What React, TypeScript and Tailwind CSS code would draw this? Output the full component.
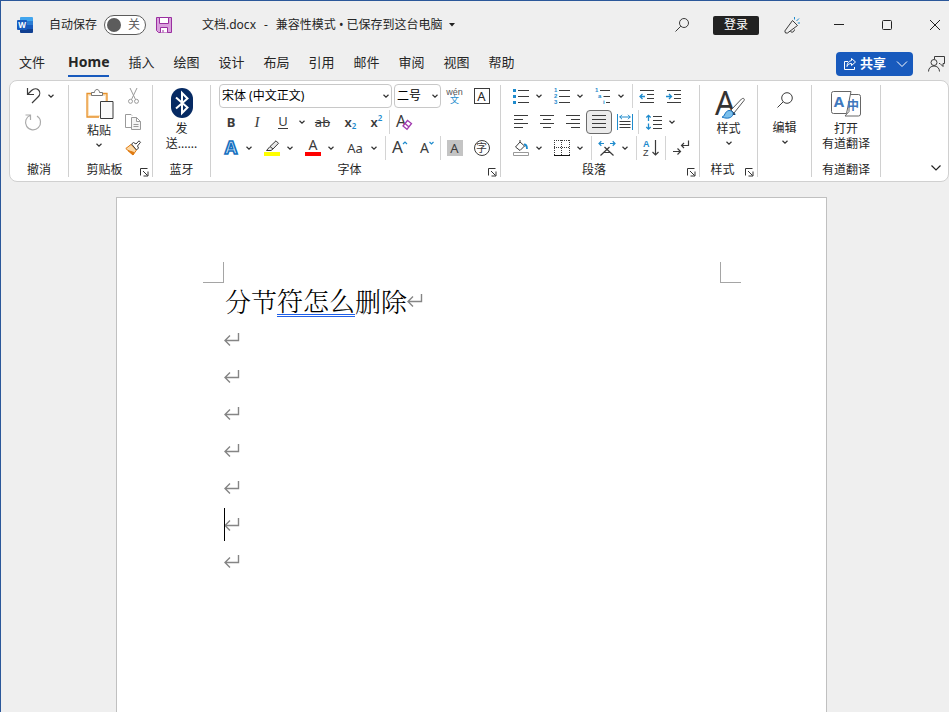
// App.tsx
import type { ReactNode } from 'react';

const UI_FONT = "font-['Noto_Sans','Noto_Sans_CJK_SC',sans-serif]";

const TABS = ['Home', '插入', '绘图', '设计', '布局', '引用', '邮件', '审阅', '视图', '帮助'];
const EMPTY_LINES = [1, 2, 3, 4, 5, 6, 7];
const CURSOR_LINE = 6;

const BLUE = '#1e8bcd';
const INK = '#3b3b3b';

// ---------- shared pieces ----------

type IconProps = { w: number; h: number; children: ReactNode; stroke?: string };

function Icon({ w, h, children, stroke = INK }: IconProps) {
  return (
    <svg
      width={w}
      height={h}
      viewBox={`0 0 ${w} ${h}`}
      fill="none"
      stroke={stroke}
      className="shrink-0 overflow-visible"
      aria-hidden="true"
    >
      {children}
    </svg>
  );
}

function Chevron() {
  return (
    <Icon w={6} h={4} stroke="#333">
      <path d="M.5.7 3 3.1 5.5.7" strokeWidth="1.2" />
    </Icon>
  );
}

type BtnProps = { label: string; w?: string; active?: boolean; children: ReactNode };

function Btn({ label, w = 'w-6', active, children }: BtnProps) {
  return (
    <button
      type="button"
      aria-label={label}
      className={`flex h-6 shrink-0 items-center justify-center rounded ${w} ${
        active ? 'border border-[#6b6b6b] bg-[#ebebeb]' : ''
      }`}
    >
      {children}
    </button>
  );
}

function Split({ label, w, children }: BtnProps) {
  return (
    <div className="flex shrink-0">
      <Btn label={label} w={w}>
        {children}
      </Btn>
      <Btn label={`${label}选项`} w="w-3">
        <Chevron />
      </Btn>
    </div>
  );
}

function Row({ className = '', children }: { className?: string; children: ReactNode }) {
  return <div className={`flex h-[26px] items-center ${className}`}>{children}</div>;
}

function Sep() {
  return <div className="h-6 w-px shrink-0 bg-[#d4d4d4]" />;
}

type GroupProps = { title: string; w: string; launcher?: boolean; children: ReactNode };

function Group({ title, w, launcher, children }: GroupProps) {
  return (
    <>
      <section aria-label={title} className={`flex shrink-0 flex-col ${w}`}>
        <div className="h-[78px]">{children}</div>
        <div className="flex h-[18px] items-center">
          <span className="flex-1 text-center">{title}</span>
          {launcher && (
            <button type="button" aria-label={`${title}设置`} className="mr-[3px] self-end pb-0.5">
              <Icon w={9} h={9} stroke="#333">
                <path d="M.5 7.5v-7h7M3 3l4.5 4.5M8 3.5v4.5H3.5" />
              </Icon>
            </button>
          )}
        </div>
      </section>
      <div className="my-0.5 w-px shrink-0 bg-[#d0d0d0]" />
    </>
  );
}

// ---------- title bar ----------

function WordLogo() {
  return (
    <Icon w={16} h={16} stroke="none">
      <path d="M4 0h11a1 1 0 0 1 1 1v3H3V1a1 1 0 0 1 1-1Z" fill="#41a5ee" />
      <path d="M3 4h13v4H3z" fill="#2b7cd3" />
      <path d="M3 8h13v4H3z" fill="#185abd" />
      <path d="M3 12h13v3a1 1 0 0 1-1 1H4a1 1 0 0 1-1-1Z" fill="#103f91" />
      <rect x="0" y="3" width="10" height="10" rx="1" fill="#185abd" />
      <text x="5" y="11" textAnchor="middle" fontSize="8" fontWeight="700" fill="#fff">
        W
      </text>
    </Icon>
  );
}

function TitleBar() {
  return (
    <header className="flex h-12 shrink-0 items-center pl-4">
      <WordLogo />
      <label htmlFor="autosave" className="ml-4">
        自动保存
      </label>
      <button
        id="autosave"
        type="button"
        role="switch"
        aria-checked="false"
        className="ml-[7px] flex h-5 w-[42px] items-center justify-between rounded-full border border-[#5c5c5c] bg-white pr-[5px] pl-[2px]"
      >
        <span className="size-[14px] rounded-full bg-[#5c5c5c]" />
        <span className="text-[#5c5c5c]">关</span>
      </button>
      <button type="button" aria-label="保存" className="ml-[10px]">
        <Icon w={16} h={16} stroke="#9a2fa0">
          <path d="M.5.5h15v15h-13l-2-2Z" fill="#d9a0dc" />
          <path d="M3.5.5h9v6h-9zM4.5 15.5v-5h7v5M7 13v2.5" fill="#fff" />
        </Icon>
      </button>
      <button type="button" className="ml-[30px] flex items-center">
        <span>文档.docx</span>
        <span className="px-2">-</span>
        <span>兼容性模式 • 已保存到这台电脑</span>
        <Icon w={17} h={4} stroke="none">
          <path d="M6 0h6L9 3.5Z" fill="#222" />
        </Icon>
      </button>

      <div className="ml-auto flex items-center">
        <button type="button" aria-label="搜索" className="mr-6">
          <Icon w={14} h={14}>
            <circle cx="9" cy="5" r="4.5" />
            <path d="M5.8 8.2.5 13.5" />
          </Icon>
        </button>
        <button type="button" className="h-[19px] w-[46px] rounded-xs bg-[#222] text-white">
          登录
        </button>
        <button type="button" aria-label="即将推出" className="flex w-[66px] justify-center">
          <Icon w={16} h={16}>
            <path d="M8.5 3.5 13.500 8.500 3.500 16H1.500L.8 14Z" strokeLinejoin="round" />
            <path d="M6.500 14c.5 2 3.800 1.500 4-1.500" />
            <path d="M10.500 2.500V0M12.500 4 15 1.500M13.800 6H16" stroke={BLUE} />
          </Icon>
        </button>
        <button type="button" aria-label="最小化" className="flex w-[28px] justify-center">
          <Icon w={10} h={10} stroke="#222">
            <path d="M0 4.500h10" />
          </Icon>
        </button>
        <button type="button" aria-label="最大化" className="flex w-[68px] justify-center">
          <Icon w={10} h={10} stroke="#222">
            <rect x=".5" y=".5" width="9" height="9" rx="1" />
          </Icon>
        </button>
        <button type="button" aria-label="关闭" className="flex w-7 justify-center">
          <Icon w={10} h={10} stroke="#222">
            <path d="m0 0 10 10M10 0 0 10" />
          </Icon>
        </button>
      </div>
    </header>
  );
}

function TabBar() {
  return (
    <nav className="flex h-[31px] shrink-0 items-start pr-1 pl-[18px] text-[13px]">
      <button type="button" className="h-7 border-b-2 border-transparent">
        文件
      </button>
      <div role="tablist" className="ml-[23px] flex gap-[19px]">
        {TABS.map((tab, i) => (
          <button
            key={tab}
            type="button"
            role="tab"
            aria-selected={i === 0}
            className={`h-7 border-b-2 ${
              i === 0 ? 'border-[#185abd] text-sm font-bold' : 'border-transparent'
            }`}
          >
            {tab}
          </button>
        ))}
      </div>
      <div className="ml-auto flex items-center pt-[3px]">
        <div className="flex h-6 rounded bg-[#185abd] font-bold text-white">
          <button type="button" className="flex items-center gap-1 pr-[5px] pl-2">
            <Icon w={12} h={12} stroke="#fff">
              <path d="M4 3.500H.5v8h10V9M7.500.5l4 3.500-4 3.500V5.500C5 5.500 4 6.500 3 8.500c0-3.500 2-5.500 4.500-6Z" />
            </Icon>
            <span className="pb-[3px]">共享</span>
          </button>
          <button type="button" aria-label="共享选项" className="px-1.5">
            <Icon w={10} h={6} stroke="#fff">
              <path d="m0 .5 5 5 5-5" />
            </Icon>
          </button>
        </div>
        <button type="button" aria-label="批注" className="ml-[15px]">
          <Icon w={17} h={16}>
            <path d="M6.500 3V.5h10v7h-1.500v3l-3-3h-1" />
            <circle cx="6" cy="6.500" r="3" />
            <path d="M.5 15.500c0-3.500 2.500-5.500 5.500-5.500s5.500 2 5.500 5.500" />
          </Icon>
        </button>
      </div>
    </nav>
  );
}

// ---------- ribbon ----------

function UndoGroup() {
  return (
    <Group title="撤消" w="w-[58px]">
      <Row className="pl-[11px]">
        <Split label="撤消">
          <Icon w={15} h={16}>
            <path d="M1.500 0v6.500H8M1.500 6.500l4-4C8 0 11 .5 12.500 2s2 4.500-.5 7l-6 6" strokeWidth="1.200" />
          </Icon>
        </Split>
      </Row>
      <Row className="pl-[11px]">
        <Btn label="重复">
          <Icon w={16} h={16} stroke="#ababab">
            <path d="M.5 1h5v5M5.500 1.300A7.500 7.500 0 1 0 12 2" strokeWidth="1.200" />
          </Icon>
        </Btn>
      </Row>
    </Group>
  );
}

function ClipboardGroup() {
  return (
    <Group title="剪贴板" w="w-[83px]" launcher>
      <div className="flex pl-3">
        <button type="button" className="flex w-9 flex-col items-center pt-1.5">
          <Icon w={28} h={30}>
            <path d="M2 5h20v23H2z" fill="#fbe3c0" stroke="none" />
            <path d="M4 7h16v19H4z" fill="#fff" stroke="none" />
            <path d="M7 4.500H2v23.500h12M17 4.500h5V12" stroke="#e8932c" strokeWidth="1.300" />
            <path d="M6.500 6.500v-3h3c0-4 5-4 5 0h3v3z" fill="#fff" stroke="#777" />
            <path d="M15.500 12.500h12.500v17H15.500z" fill="#fafafa" />
          </Icon>
          <span className="pt-0.5 leading-5">粘贴</span>
          <span className="flex h-2 items-center">
            <Chevron />
          </span>
        </button>
        <div className="w-8 pl-1">
          <Row>
            <Btn label="剪切">
              <Icon w={11} h={16} stroke="#9a9a9a">
                <path d="m2 0 5.500 11.500M9 0 3.500 11.500" />
                <circle cx="2.500" cy="13.300" r="2" />
                <circle cx="8.500" cy="13.300" r="2" />
              </Icon>
            </Btn>
          </Row>
          <Row>
            <Btn label="复制">
              <Icon w={16} h={16} stroke="#9a9a9a">
                <path d="M6 13.500H.5V.5H6l1 1" />
                <path d="M6.500 3.500h5l4 4v8h-9zM11.500 3.500v4h4M8.500 10.500h5M8.500 12.500h5" fill="#f4f4f4" />
              </Icon>
            </Btn>
          </Row>
          <Row>
            <Btn label="格式刷">
              <Icon w={16} h={16}>
                <path d="M6 4.500.8 8.500 8 15l3.500-5Z" fill="#fbd9a8" stroke="#e07a10" />
                <path d="m3 10.500 6 2-1 2.500z" fill="#e07a10" stroke="#e07a10" />
                <path d="m6.500 4 2-1.500 2.500 1.500L14 .8l1.500 1.500L12.500 6l1 2-2 2z" fill="#fff" />
              </Icon>
            </Btn>
          </Row>
        </div>
      </div>
    </Group>
  );
}

function BluetoothGroup() {
  return (
    <Group title="蓝牙" w="w-[57px]">
      <button type="button" className="flex w-full flex-col items-center pt-[5px] leading-[15px]">
        <Icon w={22} h={30} stroke="#fff">
          <rect width="22" height="30" rx="11" fill="#062a63" stroke="none" />
          <path d="m5 9.500 11.500 10L11 25V5l5.500 5.500L5 20.500" strokeWidth="2" />
        </Icon>
        <span className="pt-[3px]">发</span>
        <span>送......</span>
      </button>
    </Group>
  );
}

type PickerProps = { label: string; value: string; w: string };

function Picker({ label, value, w }: PickerProps) {
  return (
    <div className={`relative shrink-0 ${w}`}>
      <select
        aria-label={label}
        defaultValue={value}
        className="block h-6 w-full appearance-none rounded border border-[#c8c8c8] bg-white pl-[2px] text-black"
      >
        <option>{value}</option>
      </select>
      <span className="pointer-events-none absolute top-[10px] right-[3px]">
        <Chevron />
      </span>
    </div>
  );
}

function FontGroup() {
  return (
    <Group title="字体" w="w-[289px]" launcher>
      <Row className="pl-2">
        <Picker label="字体名称" value="宋体 (中文正文)" w="w-[173px]" />
        <div className="ml-0.5">
          <Picker label="字号" value="二号" w="w-[47px]" />
        </div>
        <Btn label="拼音指南" w="w-[27px]">
          <span className="flex flex-col items-center font-['Noto_Sans_CJK_SC',sans-serif] text-[9px] leading-2 text-[#555]">
            <span className="font-['Liberation_Sans',sans-serif]">wén</span>
            <span className="text-[#1e8bcd]">文</span>
          </span>
        </Btn>
        <Btn label="字符边框" w="w-[27px]">
          <span className="flex size-4 items-center justify-center border border-[#3b3b3b] text-[13px]">A</span>
        </Btn>
      </Row>
      <Row className="pl-[7px] text-[#3b3b3b]">
        <Btn label="加粗" w="w-[26px]">
          <b className="text-[13px]">B</b>
        </Btn>
        <Btn label="倾斜" w="w-[26px]">
          <i className="font-['Liberation_Serif',serif] text-[15px]">I</i>
        </Btn>
        <Split label="下划线" w="w-[26px]">
          <span className="border-b border-[#3b3b3b] text-[13px] leading-[13px]">U</span>
        </Split>
        <Btn label="删除线" w="w-[29px]">
          <s className="text-[13px]">ab</s>
        </Btn>
        <Btn label="下标" w="w-[27px]">
          <span className="text-[13px] font-semibold">x</span>
          <span className="self-end text-[8px] font-semibold text-[#1e8bcd]">2</span>
        </Btn>
        <Btn label="上标" w="w-[25px]">
          <span className="text-[13px] font-semibold">x</span>
          <span className="self-start text-[8px] font-semibold text-[#1e8bcd]">2</span>
        </Btn>
        <Sep />
        <Btn label="清除格式" w="w-[27px]">
          <Icon w={16} h={16}>
            <text x="0" y="13" fontSize="16" fill={INK} stroke="none">
              A
            </text>
            <path d="m7 12 4.500-5.500L15.500 9.500 11 15.300ZM9 9.500l4 3.500" stroke="#a23bb0" strokeWidth="1.300" fill="#fff" />
          </Icon>
        </Btn>
      </Row>
      <Row className="text-[#3b3b3b]">
        <div className="flex gap-[5px] pr-[5px] pl-2">
          <Split label="文本效果">
            <Icon w={16} h={16}>
              <text
                x="8"
                y="14"
                textAnchor="middle"
                fontSize="18"
                fontWeight="700"
                fill="#cfe6f7"
                stroke="#1470c0"
                strokeWidth="1.600"
              >
                A
              </text>
            </Icon>
          </Split>
          <Split label="突出显示">
            <Icon w={16} h={16}>
              <path d="M2.500 10.500 6 6.500 12 .8l2.500 2.500L9 9l-2 1.500ZM6 6.500 9 9" fill="#e8e8e8" />
              <path d="M0 12h16v4H0z" fill="#ff0" stroke="none" />
            </Icon>
          </Split>
          <Split label="字体颜色">
            <Icon w={16} h={16}>
              <text x="8" y="10" textAnchor="middle" fontSize="14" fill={INK} stroke="none">
                A
              </text>
              <path d="M0 12h16v4H0z" fill="#f00" stroke="none" />
            </Icon>
          </Split>
          <Split label="更改大小写" w="w-[26px]">
            <span className="text-[13px]">Aa</span>
          </Split>
        </div>
        <Sep />
        <Btn label="增大字号" w="w-[27px]">
          <Icon w={16} h={16}>
            <text x="0" y="13" fontSize="17" fill={INK} stroke="none">
              A
            </text>
            <path d="m11 4 2-2 2 2" stroke={BLUE} strokeWidth="1.200" />
          </Icon>
        </Btn>
        <Btn label="减小字号" w="w-[27px]">
          <Icon w={14} h={16}>
            <text x="0" y="13" fontSize="14" fill={INK} stroke="none">
              A
            </text>
            <path d="m9.500 2 2 2 2-2" stroke={BLUE} strokeWidth="1.200" />
          </Icon>
        </Btn>
        <Sep />
        <Btn label="字符底纹" w="w-[27px]">
          <span className="flex size-4 items-center justify-center bg-[#c4c4c4] text-[13px]">A</span>
        </Btn>
        <Btn label="带圈字符" w="w-[27px]">
          <span className="flex size-4 items-center justify-center rounded-full border border-[#3b3b3b] text-[11px]">
            字
          </span>
        </Btn>
      </Row>
    </Group>
  );
}

function ParagraphGroup() {
  return (
    <Group title="段落" w="w-[198px]" launcher>
      <Row>
        <div className="flex gap-[5px] pr-[5px] pl-2">
          <Split label="项目符号">
            <Icon w={16} h={16}>
              <path d="M0 1h3v3H0zM0 7h3v3H0zM0 13h3v3H0z" fill={BLUE} stroke="none" />
              <path d="M5 2.500h11M5 8.500h11M5 14.500h11" />
            </Icon>
          </Split>
          <Split label="编号">
            <Icon w={16} h={16}>
              <g className="font-['Liberation_Sans',sans-serif]" fontSize="6" fontWeight="700" fill={BLUE} stroke="none">
                <text x="0" y="4">1</text>
                <text x="0" y="10">2</text>
                <text x="0" y="16">3</text>
              </g>
              <path d="M5 2.500h11M5 8.500h11M5 14.500h11" />
            </Icon>
          </Split>
          <Split label="多级列表">
            <Icon w={16} h={16}>
              <g className="font-['Liberation_Sans',sans-serif]" fontSize="6" fontWeight="700" fill={BLUE} stroke="none">
                <text x="0" y="4">1</text>
                <text x="3" y="10">a</text>
                <text x="8" y="16">i</text>
              </g>
              <path d="M5 2.500h10M8.500 8.500h6.500M11 14.500h4" />
            </Icon>
          </Split>
        </div>
        <Sep />
        <Btn label="减少缩进量" w="w-[27px]">
          <Icon w={16} h={13}>
            <path d="M1 .5h14M8 4.500h7M8 8.500h7M1 12.500h14" />
            <path d="M6 6.500H1M3.500 4 1 6.500 3.500 9" stroke={BLUE} strokeWidth="1.300" />
          </Icon>
        </Btn>
        <Btn label="增加缩进量" w="w-[27px]">
          <Icon w={16} h={13}>
            <path d="M1 .5h14M8 4.500h7M8 8.500h7M1 12.500h14" />
            <path d="M0 6.500h5M3 4l2.500 2.500L3 9" stroke={BLUE} strokeWidth="1.300" />
          </Icon>
        </Btn>
      </Row>
      <Row className="pl-[7px]">
        <Btn label="左对齐" w="w-[26px]">
          <Icon w={14} h={14}>
            <path d="M0 .5h14M0 4.500h9M0 8.500h14M0 12.500h9" />
          </Icon>
        </Btn>
        <Btn label="居中" w="w-[26px]">
          <Icon w={14} h={14}>
            <path d="M0 .5h14M3 4.500h8M0 8.500h14M3 12.500h8" />
          </Icon>
        </Btn>
        <Btn label="右对齐" w="w-[26px]">
          <Icon w={14} h={14}>
            <path d="M0 .5h14M5 4.500h9M0 8.500h14M5 12.500h9" />
          </Icon>
        </Btn>
        <Btn label="两端对齐" w="w-[26px]" active>
          <Icon w={14} h={14}>
            <path d="M0 .5h14M0 4.500h14M0 8.500h14M0 12.500h14" />
          </Icon>
        </Btn>
        <Btn label="分散对齐" w="w-[26px]">
          <Icon w={16} h={16}>
            <path d="M2.500 7.500h11M2.500 10.500h11M2.500 13.500h11" />
            <path d="M.5 0v16M15.500 0v16M2.500 3h11M5 .8 2.800 3 5 5.200M11 .8 13.200 3 11 5.200" stroke={BLUE} />
          </Icon>
        </Btn>
        <Sep />
        <div className="pl-[3px]">
          <Split label="行距">
            <Icon w={16} h={14}>
              <path d="M7 1.500h9M7 5.500h9M7 9.500h9M7 13.500h9" />
              <path d="M2.500 0v6M.3 2.500 2.500.3l2.200 2.200M2.500 8.500v6M.3 12l2.200 2.200L4.700 12" stroke={BLUE} strokeWidth="1.300" />
            </Icon>
          </Split>
        </div>
      </Row>
      <Row>
        <div className="flex gap-[5px] pr-[5px] pl-2">
          <Split label="底纹">
            <Icon w={16} h={16}>
              <path d="m7 2-4.500 5 4.500 3.500L11.500 6Zm0 0V0" />
              <path d="M11 4.500c2.500 0 3 2 3 4.500" stroke={BLUE} strokeWidth="1.800" />
              <path d="M.5 12.500h15v3H.5z" stroke="#999" />
            </Icon>
          </Split>
          <Split label="边框">
            <Icon w={16} h={16}>
              <path d="M.5 0v15M15.500 0v15M7.500 0v15M0 .5h16M0 7.500h16" strokeDasharray="1 1" />
              <path d="M0 15.500h16" stroke="#111" />
            </Icon>
          </Split>
        </div>
        <Sep />
        <div className="pr-[5px] pl-[3px]">
          <Split label="中文版式">
            <Icon w={16} h={15}>
              <path d="m1.500 14.500 9-8.500M14.500 14.500 5.500 6M4.500 11.500h7" strokeWidth="1.200" />
              <path d="M5 2.500H0M2.300.3 0 2.500l2.300 2.200M11 2.500h5M13.700.3 16 2.500l-2.300 2.200" stroke={BLUE} strokeWidth="1.200" />
            </Icon>
          </Split>
        </div>
        <Sep />
        <Btn label="排序" w="w-7">
          <Icon w={16} h={18}>
            <g className="font-['Liberation_Sans',sans-serif]" fontSize="9" stroke="none">
              <text x="0" y="8" fontWeight="700" fill={BLUE}>
                A
              </text>
              <text x="0" y="17" fill={INK}>
                Z
              </text>
            </g>
            <path d="M12.500 1v15M9.500 13l3 3 3-3" strokeWidth="1.200" />
          </Icon>
        </Btn>
        <Sep />
        <Btn label="显示编辑标记" w="w-[30px]">
          <Icon w={16} h={16}>
            <path d="M15.500.5v5h-7M11 3 8.500 5.500 11 8M0 11.500h7.500M4.500 8.500l3 3-3 3" strokeWidth="1.200" />
          </Icon>
        </Btn>
      </Row>
    </Group>
  );
}

function StylesGroup() {
  return (
    <Group title="样式" w="w-[57px]" launcher>
      <button type="button" className="flex w-full flex-col items-center pt-[7px]">
        <Icon w={30} h={29}>
          <text x="1" y="25" fontSize="32" fontWeight="400" fill="#333" stroke="none">
            A
          </text>
          <path d="m17 20 10.500-11c2-1.500 3.500 0 2.500 1.500L20 23Z" fill="#fff" stroke="#555" />
          <path d="M8 27c3 0 2.500-6 7-6.500 3.500 0 5 2.500 3.500 5C16.500 29 11 28.500 8 27Z" fill="#7cc0ec" stroke="#1470c0" />
        </Icon>
        <span className="leading-5">样式</span>
        <span className="flex h-2 items-center">
          <Chevron />
        </span>
      </button>
    </Group>
  );
}

function EditGroup() {
  return (
    <>
      <section aria-label="编辑" className="w-[53px] shrink-0">
        <button type="button" className="flex w-full flex-col items-center pt-[9px]">
          <Icon w={16} h={16}>
            <circle cx="10" cy="6" r="5.300" />
            <path d="M6.200 9.800.5 15.500" />
          </Icon>
          <span className="pt-2.5 leading-5">编辑</span>
          <span className="flex h-2 items-center">
            <Chevron />
          </span>
        </button>
      </section>
      <div className="my-0.5 w-px shrink-0 bg-[#d0d0d0]" />
    </>
  );
}

function TranslateGroup() {
  return (
    <Group title="有道翻译" w="w-[68px]">
      <button type="button" className="flex w-full flex-col items-center pt-2 leading-[15px]">
        <Icon w={30} h={26}>
          <path d="M18 3.500h9.500a2 2 0 0 1 2 2V23a2 2 0 0 1-2 2H14l4-4.500Z" stroke="#666" fill="#fff" />
          <path d="M2.500.5H20l-4.500 22H2.500a2 2 0 0 1-2-2v-18a2 2 0 0 1 2-2Z" stroke="#666" fill="#fff" />
          <g fontWeight="700" fill="#3f78bd" stroke="none" textAnchor="middle">
            <text x="8" y="16" fontSize="15">
              A
            </text>
            <text x="22" y="19" fontSize="12">
              中
            </text>
          </g>
        </Icon>
        <span className="pt-1">打开</span>
        <span>有道翻译</span>
      </button>
    </Group>
  );
}

function Ribbon() {
  return (
    <div className="ml-2 flex h-[102px] shrink-0 rounded-lg border border-[#d0d0d0] bg-white pt-0.5 pb-0.5">
      <UndoGroup />
      <ClipboardGroup />
      <BluetoothGroup />
      <FontGroup />
      <ParagraphGroup />
      <StylesGroup />
      <EditGroup />
      <TranslateGroup />
      <button type="button" aria-label="功能区显示选项" className="mt-auto ml-auto pr-[7px] pb-2">
        <Icon w={10} h={6} stroke="#222">
          <path d="m.5.5 4.500 4.500L9.500.5" strokeWidth="1.200" />
        </Icon>
      </button>
    </div>
  );
}

// ---------- document ----------

function ReturnMark() {
  return (
    <Icon w={16} h={14} stroke="#858585">
      <path d="M14.500 0v7.500H1M6 2.500l-5 5 5 5" strokeWidth="1.400" />
    </Icon>
  );
}

function Page() {
  return (
    <main className="mt-[15px] flex min-h-0 flex-1 justify-center pr-[7px]">
      <article className="w-full max-w-[711px] border border-b-0 border-[#c0c0c0] bg-white pt-16">
        <div className="flex justify-between pr-[85px] pl-[86px]">
          <div className="size-[21px] border-r border-b border-[#a5a5a5]" />
          <div className="size-[21px] border-b border-l border-[#a5a5a5]" />
        </div>
        <div className="pt-px pl-[107px]">
          <p className="flex h-[37px] items-center pb-[3px] pl-px font-['Noto_Serif_CJK_SC','Noto_Sans_CJK_SC',serif] text-[26px] leading-[30px] font-light text-black">
            分节
            <span className="box-content h-[29px] border-b-3 border-double border-b-[#1f5fe8]">符怎么</span>
            删除
            <ReturnMark />
          </p>
          {EMPTY_LINES.map((n) => (
            <p key={n} className="relative flex h-[37px] items-center">
              {n === CURSOR_LINE && <span className="absolute inset-y-[2px] left-0 w-px bg-black" />}
              <ReturnMark />
            </p>
          ))}
        </div>
      </article>
    </main>
  );
}

export default function App() {
  return (
    <div
      className={`flex h-screen flex-col overflow-hidden border-t border-l border-[#2b579a] bg-[#efefef] text-[12px] leading-4 text-[#262626] ${UI_FONT}`}
    >
      <TitleBar />
      <TabBar />
      <Ribbon />
      <Page />
    </div>
  );
}
